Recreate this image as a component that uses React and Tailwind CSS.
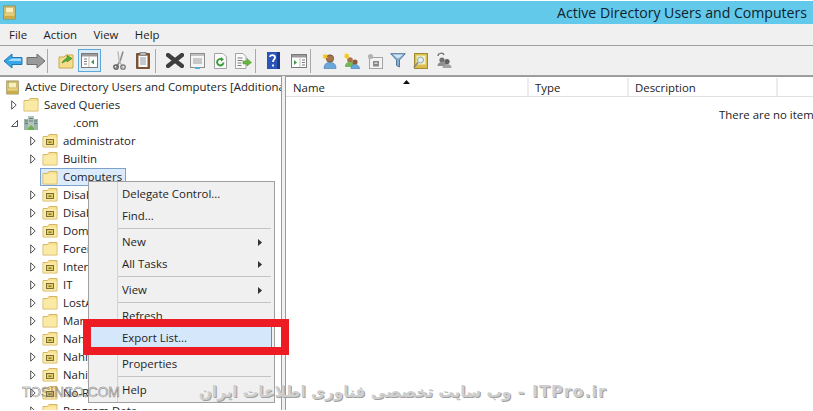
import React from "react";

const font = { fontFamily: '"Open Sans","Noto Sans",sans-serif' };

function Book({ size = 13 }) {
  return (
    <svg width={size} height={size + 2} viewBox="0 0 16 18" className="shrink-0">
      <rect x="1" y="1" width="14" height="16" fill="#e9d27c" stroke="#8a7a3a" />
      <rect x="3" y="2.5" width="10" height="7" fill="#f9efbd" stroke="#a8954c" strokeWidth="0.6" />
      <rect x="1.5" y="13" width="13" height="3.5" fill="#c9ab4a" />
    </svg>
  );
}

function Folder({ ou }) {
  return (
    <svg width="16" height="15" viewBox="0 0 16 15" className="shrink-0">
      <path d="M1 3.5 L1 14 L15 14 L15 1.5 L7 1.5 L5.5 3.5 Z" fill="#f8e08e" stroke="#d3b766" strokeWidth="1" />
      <rect x="1.5" y="4" width="13" height="9.5" fill="#fbe9a6" />
      {ou && <rect x="4.5" y="6.5" width="7" height="5" fill="#e8cd6a" stroke="#6f6128" strokeWidth="0.9" />}
      {ou && <rect x="6.5" y="8.5" width="3" height="1.4" fill="#6d7f2a" />}
    </svg>
  );
}

function Domain() {
  return (
    <svg width="16" height="16" viewBox="0 0 16 16" className="shrink-0">
      <rect x="1" y="4" width="5" height="11" fill="#9db4ab" />
      <rect x="10" y="4" width="5" height="11" fill="#9db4ab" />
      <rect x="5" y="1" width="6" height="14" fill="#b4c4be" />
      <path d="M2 6h3M2 8.5h3M11 6h3M11 8.5h3M6 3.5h4M6 6h4" stroke="#5f7a70" strokeWidth="1" />
      <path d="M5 13l3-3 3 3v2H5z" fill="#6fb04c" />
    </svg>
  );
}

function Expander() {
  return (
    <svg width="6" height="10" viewBox="0 0 6 10" className="block">
      <path d="M0.7 0.8 L5.2 5 L0.7 9.2 Z" fill="#fff" stroke="#555" strokeWidth="1" />
    </svg>
  );
}

function Open() {
  return (
    <svg width="7" height="7" viewBox="0 0 7 7" className="block">
      <path d="M6.5 0.5 L6.5 6.5 L0.5 6.5 Z" fill="#fff" stroke="#555" strokeWidth="1" />
    </svg>
  );
}

function Row({ indent, exp, icon, label, selected }) {
  return (
    <div className="flex h-[18px] items-center" style={{ paddingLeft: indent }}>
      <div className="flex w-[11px] shrink-0 justify-start">
        {exp === "closed" && <Expander />}
        {exp === "open" && <Open />}
      </div>
      <div className={selected ? "-ml-[1px] flex h-[18px] items-center gap-[4px] border border-[#7da2ce] bg-[#dcebfc] pr-[3px] pl-[1px]" : "flex items-center gap-[4px] pl-[1px]"}>
        {icon}
        <span className="ml-[1px] whitespace-nowrap text-[11.4px] text-[#222]">{label}</span>
      </div>
    </div>
  );
}

const B = ({ children }) => <div className="flex h-[24px] w-[23px] items-center justify-center">{children}</div>;
const TSep = () => <div className="h-[24px] w-px bg-[#a9a9a9]" />;

function Toolbar() {
  return (
    <div className="flex h-[30px] items-center border-b border-[#a0a0a0] bg-[#f0f0f0] pl-[1px]">
      <B>
        <svg width="20" height="16" viewBox="0 0 20 16"><path d="M1 8 L9 1 V4.5 H19 V11.5 H9 V15 Z" fill="#37a6e6" stroke="#1f78b8" strokeLinejoin="round" /><path d="M9 5.5H18V8H5Z" fill="#a6dcfa" /></svg>
      </B>
      <B>
        <svg width="20" height="16" viewBox="0 0 20 16"><path d="M19 8 L11 1 V4.5 H1 V11.5 H11 V15 Z" fill="#9a9a9a" stroke="#6e6e6e" strokeLinejoin="round" /></svg>
      </B>
      <TSep />
      <div className="w-[6px]" />
      <B>
        <svg width="16" height="17" viewBox="0 0 16 17"><path d="M1 5 L6 5 L8 3 L15 3 L15 16 L1 16Z" fill="#f6dd8a" stroke="#c8a951" /><path d="M4 11 C6 7 8 7 9 6 V3.5 L14 6.5 L9 10 V8 C8 9 6 10 4 11Z" fill="#53ad3a" stroke="#2f7f22" strokeWidth="0.6" /></svg>
      </B>
      <div className="ml-[1px] flex h-[23px] w-[23px] items-center justify-center border border-[#5da8d8] bg-[#d8ebf9]">
        <svg width="17" height="15" viewBox="0 0 17 15"><rect x="0.5" y="0.5" width="16" height="14" fill="#fff" stroke="#7a7a7a" /><rect x="1" y="1" width="15" height="2.5" fill="#9a9a9a" /><path d="M3 6h3M3 8.5h3M3 11h3" stroke="#777" /><path d="M8 4v10" stroke="#bbb" /><path d="M13 6.5v5l-3-2.5z" fill="#3f9a4c" /></svg>
      </div>
      <div className="w-[7px]" />
      <B>
        <svg width="13" height="19" viewBox="0 0 13 19"><path d="M10 0.5 L7.5 9 L3 17" stroke="#8d8d8d" strokeWidth="1.6" fill="none" /><path d="M5 0.5 L6 9 L10 17" stroke="#b9b9b9" strokeWidth="1.4" fill="none" /><circle cx="3" cy="16" r="2.2" fill="none" stroke="#555" strokeWidth="1.3" /><circle cx="10" cy="16" r="2.2" fill="none" stroke="#777" strokeWidth="1.3" /></svg>
      </B>
      <B>
        <svg width="14" height="17" viewBox="0 0 14 17"><rect x="0.7" y="1.7" width="12.6" height="14.6" fill="#8d5a35" stroke="#5e3a20" /><rect x="2.5" y="3.5" width="9" height="11.5" fill="#fbfbfb" /><path d="M4 6h6M4 8h6M4 10h6M4 12h6" stroke="#8a9aa5" /><rect x="4" y="0.5" width="6" height="3" fill="#b9b9b9" stroke="#666" strokeWidth="0.6" /></svg>
      </B>
      <div className="ml-[1px]"><TSep /></div>
      <div className="w-[7px]" />
      <B>
        <svg width="18" height="15" viewBox="0 0 18 15"><path d="M2 2 L16 13 M16 2 L2 13" stroke="#3f3f3f" strokeWidth="4.2" strokeLinecap="round" /></svg>
      </B>
      <B>
        <svg width="15" height="16" viewBox="0 0 15 16"><rect x="0.5" y="0.5" width="14" height="14" fill="#f5f5f5" stroke="#8d8d8d" /><rect x="1" y="1" width="13" height="2" fill="#c0c0c0" /><path d="M3 6h9M3 8h9M3 10h9" stroke="#9a9a9a" /><rect x="5" y="14" width="5" height="2" fill="#4fb3e0" /></svg>
      </B>
      <B>
        <svg width="13" height="16" viewBox="0 0 13 16"><path d="M0.5 0.5H9L12.5 4V15.5H0.5Z" fill="#fafafa" stroke="#a3a3a3" /><path d="M9.5 9.5A3.2 3.2 0 1 1 8 6.5" fill="none" stroke="#3b9e3b" strokeWidth="2" /><path d="M7 4l3 2.5-3 2z" fill="#3b9e3b" /></svg>
      </B>
      <B>
        <svg width="17" height="16" viewBox="0 0 17 16"><path d="M0.5 0.5H8L11 3.5V15.5H0.5Z" fill="#fafafa" stroke="#a3a3a3" /><path d="M2.5 5h5M2.5 7.5h5M2.5 10h4M2.5 12.5h4" stroke="#7a7a7a" /><path d="M8 8h4V5.5L16.500 9.500L12 13V11H8Z" fill="#68b83f" stroke="#3f8e24" strokeWidth="0.5" /></svg>
      </B>
      <TSep />
      <div className="w-[6px]" />
      <B>
        <svg width="13" height="17" viewBox="0 0 13 17"><rect width="13" height="17" fill="#2b55b8" /><rect x="10" width="3" height="17" fill="#1c3a87" /><path d="M3 5C3 2.500 8 2.500 8 5.500C8 7.500 6 7.500 6 10M6 12.500V14.500" fill="none" stroke="#fff" strokeWidth="1.800" /></svg>
      </B>
      <div className="w-[2px]" />
      <B>
        <svg width="16" height="14" viewBox="0 0 16 14"><rect x="0.5" y="0.5" width="15" height="13" fill="#fff" stroke="#7a7a7a" /><rect x="1" y="1" width="14" height="2.5" fill="#9a9a9a" /><path d="M3 6v5l3-2.5z" fill="#3f9a4c" /><path d="M9 4v9" stroke="#bbb" /><path d="M11 6h3M11 8.5h3M11 11h3" stroke="#777" /></svg>
      </B>
      <TSep />
      <div className="w-[6px]" />
      <B>
        <svg width="16" height="18" viewBox="0 0 16 17"><circle cx="9" cy="6" r="3.7" fill="#a8754a" stroke="#5c3d22" strokeWidth="0.6" /><path d="M3 16c0-5 3-6 6-6s6 1 6 6z" fill="#6aa7da" stroke="#3f79ad" strokeWidth="0.6" /><path d="M4 0.5l.8 2 2-.6-1 2 1.4 1.3-2 .2L4 7l-.8-1.6-2-.2 1.4-1.3-1-2 2 .6z" fill="#f5c518" /></svg>
      </B>
      <B>
        <svg width="17" height="17" viewBox="0 0 17 17"><circle cx="7" cy="8" r="2.8" fill="#a8754a" /><path d="M2 15c0-4 2-5 5-5s5 1 5 5z" fill="#74b65a" /><circle cx="12" cy="10" r="2.6" fill="#8a5c38" /><path d="M8 17c0-3.500 2-4.500 4-4.500s4.500 1 4.500 4.500z" fill="#6aa7da" stroke="#3f79ad" strokeWidth="0.5" /><path d="M3.500 0.500l.8 2 2-.6-1 2 1.400 1.300-2 .2-1.200 1.600-.8-1.600-2-.2 1.400-1.300-1-2 2 .6z" fill="#f5c518" /></svg>
      </B>
      <B>
        <svg width="16" height="16" viewBox="0 0 16 16"><rect x="2.500" y="4.500" width="13" height="11" fill="#f3f3f3" stroke="#a4a4a4" /><rect x="6" y="8" width="6" height="5.500" fill="#888" /><rect x="7.500" y="9.500" width="3" height="1.500" fill="#dcdcdc" /><circle cx="3.500" cy="3.500" r="2.600" fill="#b3b3b3" /></svg>
      </B>
      <B>
        <svg width="16" height="15" viewBox="0 0 16 15"><path d="M0.700 0.700H15.300L9.500 7V14L6.500 12.500V7Z" fill="#86aed0" stroke="#54799c" /><path d="M3 1.500H13L9 5H7Z" fill="#d3e5f2" /></svg>
      </B>
      <B>
        <svg width="15" height="16" viewBox="0 0 15 16"><rect x="1.500" y="0.500" width="13" height="15" fill="#d9bd4e" stroke="#a48a2e" /><rect x="3.500" y="2.500" width="9" height="9" fill="#f8f0c4" /><circle cx="7.500" cy="7" r="3" fill="#dff0fb" stroke="#8aa" /><path d="M5 9.500 L0.800 14.500" stroke="#888" strokeWidth="1.600" /></svg>
      </B>
      <B>
        <svg width="16" height="17" viewBox="0 0 16 17"><path d="M2 4C2 1 7 0 8 3" fill="none" stroke="#666" strokeWidth="1.200" /><circle cx="6" cy="8" r="2.600" fill="#6f6f6f" /><path d="M1.500 14c0-3 2-4 4.500-4s4.500 1 4.500 4z" fill="#8d8d8d" /><circle cx="11" cy="9.500" r="2.600" fill="#5f5f5f" /><path d="M6.500 16c0-3 2-4 4.500-4s4.500 1 4.500 4z" fill="#a1a1a1" /></svg>
      </B>
    </div>
  );
}

function MenuItem({ label, arrow }) {
  return (
    <div className="flex h-[22px] items-center pl-[33px] pr-[12px] text-[11.4px] text-[#1e1e1e]">
      <span className="flex-1">{label}</span>
      {arrow && (
        <svg width="4" height="7" viewBox="0 0 4 7"><path d="M0 0L4 3.500L0 7Z" fill="#333" /></svg>
      )}
    </div>
  );
}

const MSep = () => <div className="mt-[1px] mr-[3px] mb-[2px] ml-[29px] h-px bg-[#c4c4c4]" />;

const folders = [
  ["administrator", true], ["Builtin", false], ["Computers", false, true], ["Disabled", true], ["Disabled", true],
  ["Domain", true], ["Foreign", false], ["Internal", true], ["IT", true], ["LostAndFound", false], ["Managed", false],
  ["Nahiye", true], ["Nahiye", true], ["Nahiye", true], ["No-Replication", true], ["Program Data", false],
];

export default function App() {
  return (
    <div className="relative h-[411px] w-[813px] overflow-hidden bg-white" style={font}>
      <div className="h-px bg-white" />
      <div className="flex h-[23px] items-center justify-between bg-[#63c9ea] pl-[3px] pr-[6px]">
        <Book />
        <span className="text-[14.1px] text-[#10222c]">Active Directory Users and Computers</span>
      </div>
      <div className="flex h-[22px] items-center gap-[16.5px] border-b border-[#a0a0a0] bg-[#f0f0f0] pl-[9px] text-[11.4px] text-[#1e1e1e]">
        <span>File</span><span>Action</span><span>View</span><span>Help</span>
      </div>
      <Toolbar />
      <div className="flex h-[334px] bg-[#f0f0f0]">
        <div className="h-full w-[282px] overflow-hidden border-t border-r border-[#9a9a9a] bg-white pt-[1px]">
          <div className="flex h-[18px] items-center gap-[6px] pl-[6px]">
            <Book />
            <span className="whitespace-nowrap text-[11.4px] text-[#222]">Active Directory Users and Computers [Additional]</span>
          </div>
          <Row indent={11} exp="closed" icon={<Folder />} label="Saved Queries" />
          <Row indent={11} exp="open" icon={<Domain />} label={<span className="ml-[29px]">.com</span>} />
          {folders.map(([l, ou, sel], i) => (
            <Row key={i} indent={30} exp={sel ? null : "closed"} icon={<Folder ou={ou} />} label={l} selected={sel} />
          ))}
        </div>
        <div className="w-[3px]" />
        <div className="h-full flex-1 overflow-hidden border-t border-l border-[#9a9a9a] bg-white">
          <div className="mt-[1px] flex h-[19px] items-center border-b border-[#e0e0e0] text-[11.4px] text-[#222]">
            <div className="relative h-full w-[243px] border-r-2 border-[#ececec] pl-[7px] leading-[19px]">
              Name
              <svg className="absolute left-[117px] top-[2px]" width="7" height="4" viewBox="0 0 7 4"><path d="M0 4L3.500 0L7 4Z" fill="#111" /></svg>
            </div>
            <div className="h-full w-[100px] border-r-2 border-[#ececec] pl-[6px] leading-[19px]">Type</div>
            <div className="h-full w-[149px] border-r-2 border-[#ececec] pl-[6px] leading-[19px]">Description</div>
          </div>
          <div className="whitespace-nowrap pt-[9px] pl-[433px] text-[11.4px] text-[#222]">There are no items</div>
        </div>
      </div>

      <div className="absolute left-[88px] top-[181px] h-[222px] w-[187px] border border-[#a0a0a0] bg-[#f0f0f0] pt-[1px]">
        <div className="absolute bottom-0 left-[28px] top-0 w-px bg-[#d4d4d4]" />
        <MenuItem label="Delegate Control..." />
        <MenuItem label="Find..." />
        <MSep />
        <MenuItem label="New" arrow />
        <MenuItem label="All Tasks" arrow />
        <MSep />
        <MenuItem label="View" arrow />
        <MSep />
        <MenuItem label="Refresh" />
        <div className="relative mr-[2px] border-r border-[#3a9bd8] bg-[#d5e8fb]"><MenuItem label="Export List..." /></div>
        <MSep />
        <MenuItem label="Properties" />
        <MSep />
        <MenuItem label="Help" />
      </div>

      <div className="absolute left-[83px] top-[319px] h-[36px] w-[206px] border-8 border-[#ed1c24]" />

      <div className="absolute left-[22px] top-[383px] text-[13.8px] text-transparent [-webkit-text-stroke:0.5px_#777]" style={{ fontFamily: '"Liberation Sans",sans-serif' }}>TOSINSO.COM</div>
      <div dir="rtl" className="absolute left-[207px] top-[380px] w-[400px] whitespace-nowrap text-right text-[16px] font-bold tracking-[1px] text-[#cfcfcf] [text-shadow:1px_1px_0_#a0a0a0]" style={{ fontFamily: '"DejaVu Sans",sans-serif' }}>ITPro.ir - <span className="text-[15.3px]">وب سایت تخصصی فناوری اطلاعات ایران</span></div>
    </div>
  );
}
